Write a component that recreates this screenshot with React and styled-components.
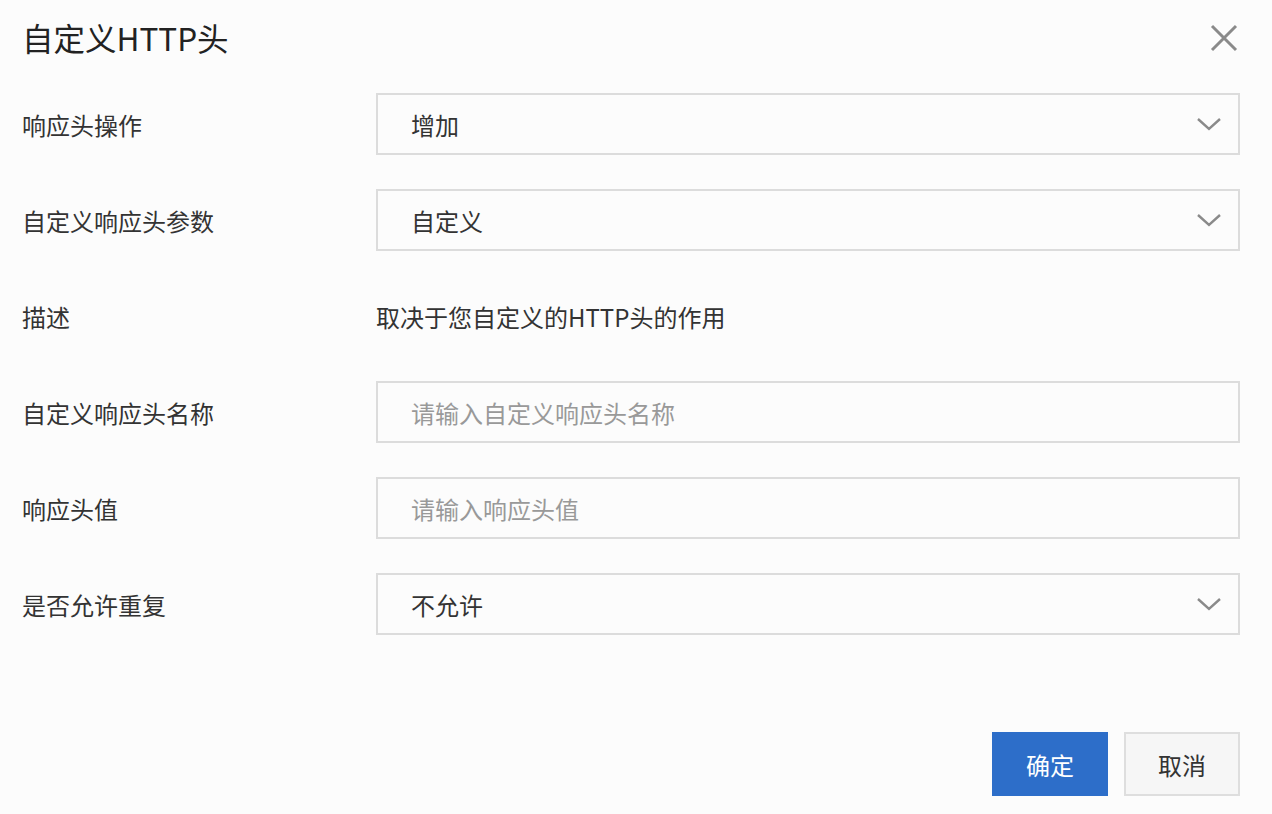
import React from "react";
import styled, { createGlobalStyle } from "styled-components";

const Global = createGlobalStyle`
  html, body { margin: 0; padding: 0; background: #fcfcfc; }
  body { font-family: "Noto Sans CJK SC", "Noto Sans", sans-serif; color: #333; }
  * { box-sizing: border-box; }
`;

const Dialog = styled.div`
  width: 1272px;
  height: 814px;
  padding: 0 32px 0 22px;
  display: flex;
  flex-direction: column;
  background: #fcfcfc;
`;

const Header = styled.div`
  height: 76px;
  display: flex;
  align-items: center;
  justify-content: space-between;
`;

const Title = styled.h1`
  margin: 0;
  font-size: 31.5px;
  font-weight: 400;
  color: #222;
  line-height: 1;
`;

const CloseBtn = styled.button`
  border: 0;
  background: none;
  padding: 0;
  margin-right: 2px;
  width: 28px;
  height: 28px;
  display: flex;
  align-items: center;
  justify-content: center;
  cursor: pointer;
`;

const Form = styled.div`
  margin-top: 17px;
  display: flex;
  flex-direction: column;
  gap: 34px;
`;

const Row = styled.div`
  display: grid;
  grid-template-columns: 354px 1fr;
  height: 62px;
  align-items: center;
`;

const Label = styled.div`
  font-size: 24px;
  color: #333;
`;

const Field = styled.div`
  height: 62px;
  border: 2px solid #dcdcdc;
  background: #fcfcfc;
  display: flex;
  align-items: center;
  justify-content: space-between;
  padding: 0 16px 0 33px;
  font-size: 24px;
  color: ${(p) => (p.$placeholder ? "#999" : "#333")};
`;

const Plain = styled.div`
  font-size: 24px;
  color: #333;
`;

const Footer = styled.div`
  margin-top: 97px;
  display: flex;
  justify-content: flex-end;
  gap: 16px;
`;

const Button = styled.button`
  width: 116px;
  height: 64px;
  font-family: inherit;
  font-size: 24px;
  border: 2px solid ${(p) => (p.$primary ? "#2d6ec9" : "#dedede")};
  background: ${(p) => (p.$primary ? "#2d6ec9" : "#f6f6f6")};
  color: ${(p) => (p.$primary ? "#fff" : "#333")};
  cursor: pointer;
`;

const Chevron = () => (
  <svg width="26" height="16" viewBox="0 0 26 16">
    <polyline points="2,3 13,13 24,3" fill="none" stroke="#8a8a8a" strokeWidth="2.4" />
  </svg>
);

const CloseIcon = () => (
  <svg width="28" height="28" viewBox="0 0 28 28">
    <path d="M2 2 L26 26 M26 2 L2 26" stroke="#8a8a8a" strokeWidth="3" fill="none" />
  </svg>
);

const rows = [
  { label: "响应头操作", type: "select", value: "增加" },
  { label: "自定义响应头参数", type: "select", value: "自定义" },
  { label: "描述", type: "text", value: "取决于您自定义的HTTP头的作用" },
  { label: "自定义响应头名称", type: "input", value: "请输入自定义响应头名称" },
  { label: "响应头值", type: "input", value: "请输入响应头值" },
  { label: "是否允许重复", type: "select", value: "不允许" },
];

export default function App() {
  return (
    <>
      <Global />
      <Dialog>
        <Header>
          <Title>自定义HTTP头</Title>
          <CloseBtn aria-label="关闭"><CloseIcon /></CloseBtn>
        </Header>
        <Form>
          {rows.map((r) => (
            <Row key={r.label}>
              <Label>{r.label}</Label>
              {r.type === "text" ? (
                <Plain>{r.value}</Plain>
              ) : (
                <Field $placeholder={r.type === "input"}>
                  <span>{r.value}</span>
                  {r.type === "select" && <Chevron />}
                </Field>
              )}
            </Row>
          ))}
        </Form>
        <Footer>
          <Button $primary>确定</Button>
          <Button>取消</Button>
        </Footer>
      </Dialog>
    </>
  );
}
